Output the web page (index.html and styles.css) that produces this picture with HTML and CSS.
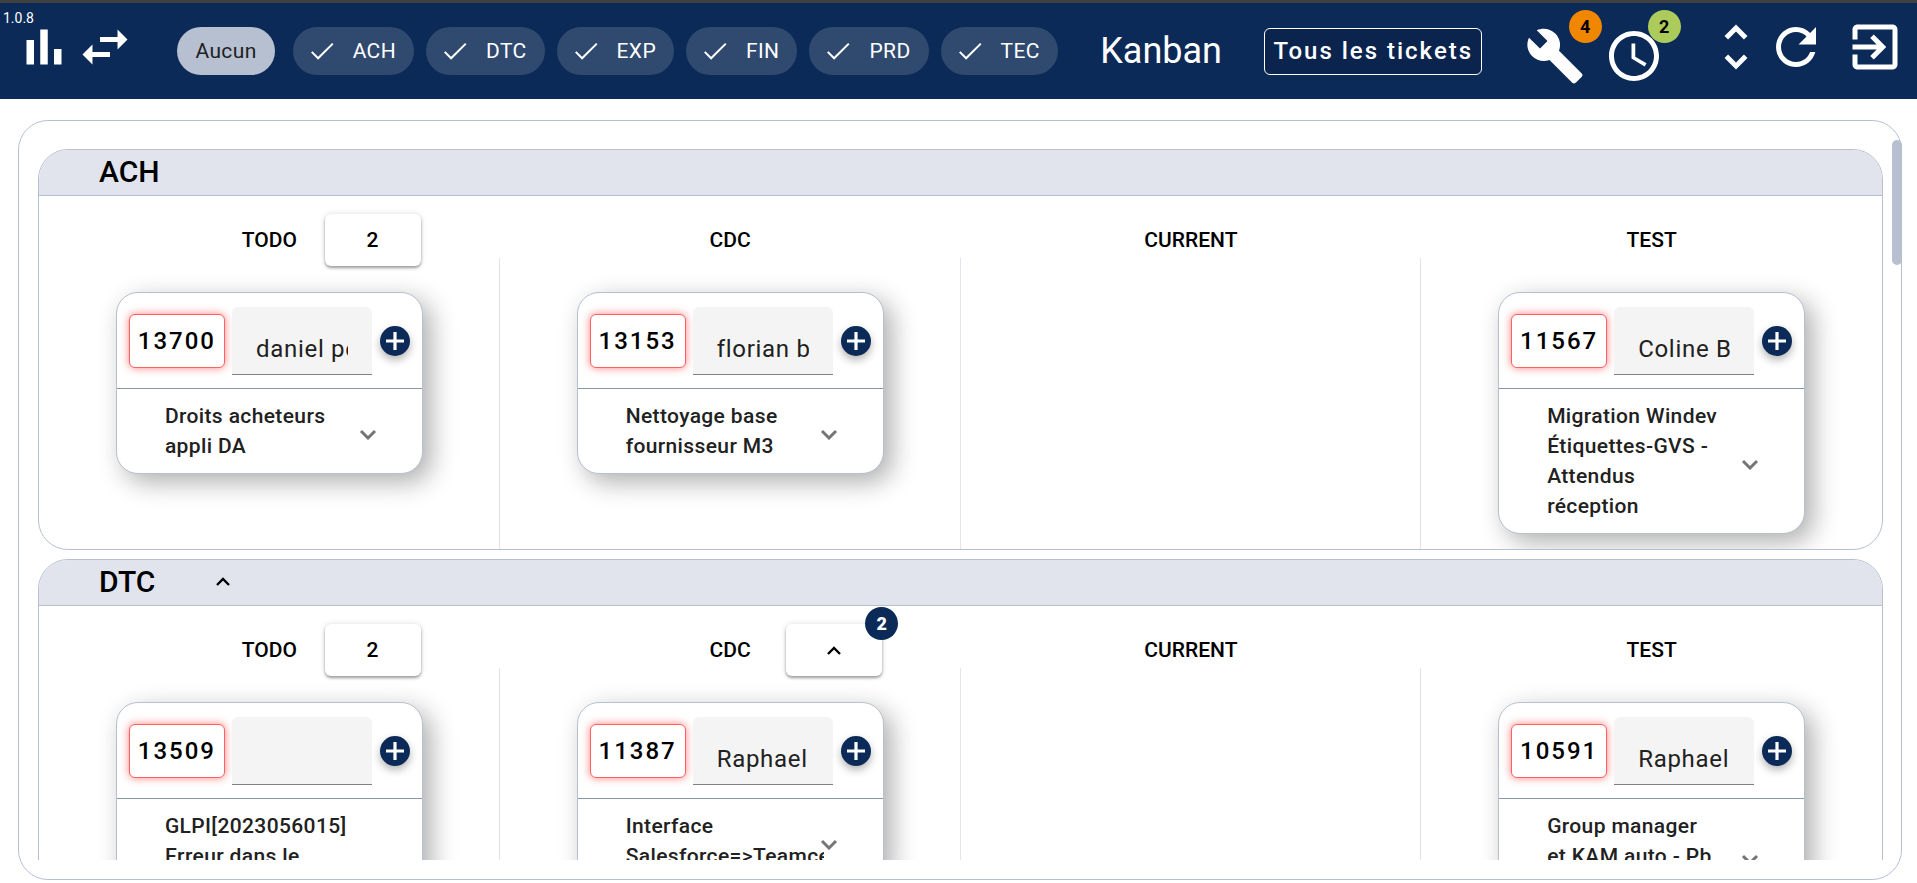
FILE: index.html
```html
<!DOCTYPE html>
<html lang="fr">
<head>
<meta charset="utf-8">
<title>Kanban</title>
<link rel="stylesheet" href="styles.css">
</head>
<body>
<svg class="defs" aria-hidden="true">
  <symbol id="check" viewBox="1 3 23 18"><path d="M1.73 12.91 8.1 19.28 22.79 4.59" fill="none" stroke="currentColor" stroke-width="2"/></symbol>
  <symbol id="plus" viewBox="0 0 18 18"><path d="M7.4 0h3.2v7.4H18v3.2h-7.4V18H7.4v-7.4H0V7.4h7.4z" fill="currentColor"/></symbol>
  <symbol id="down" viewBox="0 0 18 18"><path d="M2 9l7 7 7-7" fill="none" stroke="currentColor" stroke-width="3"/></symbol>
  <symbol id="up" viewBox="0 0 14 9"><path d="M1 8l6-6 6 6" fill="none" stroke="currentColor" stroke-width="2.4"/></symbol>
</svg>
<header class="topbar">
  <span class="version">1.0.8</span>
  <nav class="nav">
    <button class="icon-btn" aria-label="Statistiques"><svg viewBox="0 0 24 24"><path d="M5 9.2h3V19H5zM10.5 5h3v14h-3zM16 12.8h3V19h-3z"/></svg></button>
    <button class="icon-btn" aria-label="Permuter"><svg viewBox="0 0 24 24"><path d="M6.99 11L3 15l3.99 4v-3H14v-2H6.99v-3zM21 9l-3.99-4v3H10v2h7.01v3L21 9z"/></svg></button>
  </nav>
  <div class="chips">
    <button class="chip chip-none">Aucun</button>
    <button class="chip" aria-pressed="true"><svg><use href="#check"/></svg>ACH</button>
    <button class="chip" aria-pressed="true"><svg><use href="#check"/></svg>DTC</button>
    <button class="chip" aria-pressed="true"><svg><use href="#check"/></svg>EXP</button>
    <button class="chip" aria-pressed="true"><svg><use href="#check"/></svg>FIN</button>
    <button class="chip" aria-pressed="true"><svg><use href="#check"/></svg>PRD</button>
    <button class="chip" aria-pressed="true"><svg><use href="#check"/></svg>TEC</button>
  </div>
  <h1 class="title">Kanban</h1>
  <button class="all-tickets">Tous les tickets</button>
  <div class="alerts">
    <button class="icon-btn" aria-label="Maintenance"><svg viewBox="0 0 24 24"><path d="M22.7 19l-9.1-9.1c.9-2.3.4-5-1.5-6.9-2-2-5-2.4-7.4-1.3L9 6 6 9 1.6 4.7C.4 7.1.9 10.1 2.9 12.1c1.9 1.9 4.6 2.4 6.9 1.5l9.1 9.1c.4.4 1 .4 1.4 0l2.3-2.3c.5-.4.5-1.1.1-1.4z"/></svg><span class="badge badge-orange">4</span></button>
    <button class="icon-btn" aria-label="En attente"><svg viewBox="0 0 24 24"><path d="M11.99 2C6.47 2 2 6.48 2 12s4.47 10 9.99 10C17.52 22 22 17.52 22 12S17.52 2 11.99 2zM12 20c-4.42 0-8-3.58-8-8s3.58-8 8-8 8 3.58 8 8-3.58 8-8 8zm.5-13H11v6l5.25 3.15.75-1.23-4.5-2.67z"/></svg><span class="badge badge-green">2</span></button>
  </div>
  <div class="actions">
    <button class="icon-btn" aria-label="Tout déplier"><svg viewBox="0 0 24 24"><path d="M12 5.83L15.17 9l1.41-1.41L12 3 7.41 7.59 8.83 9 12 5.83zm0 12.34L8.83 15l-1.41 1.41L12 21l4.59-4.59L15.17 15 12 18.17z"/></svg></button>
    <button class="icon-btn" aria-label="Rafraîchir"><svg viewBox="0 0 24 24"><path d="M17.65 6.35C16.2 4.9 14.21 4 12 4c-4.42 0-7.99 3.58-7.99 8s3.57 8 7.99 8c3.73 0 6.84-2.55 7.73-6h-2.08c-.82 2.33-3.04 4-5.65 4-3.31 0-6-2.69-6-6s2.69-6 6-6c1.66 0 3.14.69 4.22 1.78L13 11h7V4l-2.35 2.35z"/></svg></button>
    <button class="icon-btn exit" aria-label="Quitter"><svg viewBox="0 0 24 24"><path d="M10.09 15.59L11.5 17l5-5-5-5-1.41 1.41L12.67 11H3v2h9.67l-2.58 2.59zM19 3H5c-1.11 0-2 .9-2 2v4h2V5h14v14H5v-4H3v4c0 1.1.89 2 2 2h14c1.1 0 2-.9 2-2V5c0-1.1-.9-2-2-2z"/></svg></button>
  </div>
</header>
<main class="board">
  <div class="lanes">
    <section class="lane">
      <header class="lane-head"><h2>ACH</h2></header>
      <div class="columns">
        <section class="column">
          <header class="column-head"><h3>TODO</h3><button class="count">2</button></header>
          <div class="column-body">
            <article class="card">
              <div class="card-top"><button class="ticket">13700</button><input class="owner" type="text" value="daniel pe" aria-label="Responsable du ticket 13700"><button class="add" aria-label="Ajouter"><svg><use href="#plus"/></svg></button></div>
              <button class="card-info"><span class="card-text">Droits acheteurs appli DA</span><svg><use href="#down"/></svg></button>
            </article>
          </div>
        </section>
        <section class="column">
          <header class="column-head"><h3>CDC</h3></header>
          <div class="column-body">
            <article class="card">
              <div class="card-top"><button class="ticket">13153</button><input class="owner" type="text" value="florian b" aria-label="Responsable du ticket 13153"><button class="add" aria-label="Ajouter"><svg><use href="#plus"/></svg></button></div>
              <button class="card-info"><span class="card-text">Nettoyage base fournisseur M3</span><svg><use href="#down"/></svg></button>
            </article>
          </div>
        </section>
        <section class="column">
          <header class="column-head"><h3>CURRENT</h3></header>
          <div class="column-body"></div>
        </section>
        <section class="column">
          <header class="column-head"><h3>TEST</h3></header>
          <div class="column-body">
            <article class="card">
              <div class="card-top"><button class="ticket">11567</button><input class="owner" type="text" value="Coline B" aria-label="Responsable du ticket 11567"><button class="add" aria-label="Ajouter"><svg><use href="#plus"/></svg></button></div>
              <button class="card-info"><span class="card-text">Migration Windev Étiquettes-GVS - Attendus réception</span><svg><use href="#down"/></svg></button>
            </article>
          </div>
        </section>
      </div>
    </section>
    <section class="lane">
      <header class="lane-head"><h2>DTC</h2><button class="fold" aria-label="Replier"><svg><use href="#up"/></svg></button></header>
      <div class="columns">
        <section class="column">
          <header class="column-head"><h3>TODO</h3><button class="count">2</button></header>
          <div class="column-body">
            <article class="card">
              <div class="card-top"><button class="ticket">13509</button><input class="owner" type="text" aria-label="Responsable du ticket 13509"><button class="add" aria-label="Ajouter"><svg><use href="#plus"/></svg></button></div>
              <button class="card-info"><span class="card-text lines-4">GLPI[2023056015] Erreur dans le</span><svg><use href="#down"/></svg></button>
            </article>
          </div>
        </section>
        <section class="column">
          <header class="column-head"><h3>CDC</h3><button class="count" aria-label="Replier la colonne"><svg><use href="#up"/></svg><span class="badge badge-navy">2</span></button></header>
          <div class="column-body">
            <article class="card">
              <div class="card-top"><button class="ticket">11387</button><input class="owner" type="text" value="Raphael" aria-label="Responsable du ticket 11387"><button class="add" aria-label="Ajouter"><svg><use href="#plus"/></svg></button></div>
              <button class="card-info"><span class="card-text">Interface Salesforce=&gt;Teamcenter</span><svg><use href="#down"/></svg></button>
            </article>
          </div>
        </section>
        <section class="column">
          <header class="column-head"><h3>CURRENT</h3></header>
          <div class="column-body"></div>
        </section>
        <section class="column">
          <header class="column-head"><h3>TEST</h3></header>
          <div class="column-body">
            <article class="card">
              <div class="card-top"><button class="ticket">10591</button><input class="owner" type="text" value="Raphael" aria-label="Responsable du ticket 10591"><button class="add" aria-label="Ajouter"><svg><use href="#plus"/></svg></button></div>
              <button class="card-info"><span class="card-text lines-3">Group manager et KAM auto - Pb</span><svg><use href="#down"/></svg></button>
            </article>
          </div>
        </section>
      </div>
    </section>
  </div>
  <div class="thumb"></div>
</main>
</body>
</html>
```
FILE: styles.css
```css
:root {
  --navy: #0c2a57;
  --line: #b6c0d0;
  --pale: #e1e4ed;
}

* { box-sizing: border-box; }

body {
  margin: 0;
  height: 100vh;
  display: flex;
  flex-direction: column;
  overflow: hidden;
  background: #fff;
  font-family: Roboto, "Liberation Sans", sans-serif;
  color: #000;
}

h1, h2, h3 { margin: 0; font-weight: 500; }

button {
  margin: 0;
  padding: 0;
  border: 0;
  background: none;
  font: inherit;
  color: inherit;
  cursor: pointer;
}

.defs { position: absolute; width: 0; height: 0; }

/* Top bar */
.topbar {
  position: relative;
  flex: none;
  display: flex;
  align-items: center;
  justify-content: space-between;
  height: 99px;
  padding: 0 12px 0 14px;
  border-top: 3px solid #414141;
  background: var(--navy);
  color: #fff;
}

.version {
  position: absolute;
  top: 7px;
  left: 3px;
  font-size: 14px;
  line-height: 16px;
}

.nav, .chips, .alerts, .actions { display: flex; align-items: center; }
.nav { gap: 1px; }
.nav, .actions { padding-bottom: 8px; }
.alerts { gap: 19px; padding-top: 10px; }
.chips { gap: 12px; }
.exit { margin-left: 19px; }

.icon-btn { position: relative; width: 60px; height: 60px; }
.icon-btn svg { display: block; width: 60px; height: 60px; fill: currentColor; }

.chip {
  display: flex;
  align-items: center;
  gap: 19px;
  height: 48px;
  padding: 0 18px;
  border-radius: 24px;
  background: #304a6f;
  font-size: 21px;
  line-height: 30px;
  letter-spacing: .0178em;
}
.chip svg { width: 23px; height: 18px; }
.chip-none { margin-right: 6px; background: var(--line); color: #212121; }

.title { font-size: 36px; line-height: 48px; font-weight: 400; }

.all-tickets {
  height: 47px;
  padding: 0 8px;
  border: 1px solid #fff;
  border-radius: 6px;
  background: #0a244d;
  font-size: 24px;
  font-weight: 500;
  letter-spacing: 2px;
}

.badge {
  position: absolute;
  top: -16px;
  right: -17px;
  width: 33px;
  height: 33px;
  border-radius: 50%;
  font-size: 18px;
  line-height: 33px;
  font-weight: 700;
  letter-spacing: 0;
  text-align: center;
}
.badge-orange { background: #f18700; color: #000; }
.badge-green { background: #adcb5b; color: #000; }
.badge-navy { top: -17px; right: -16px; background: var(--navy); color: #fff; font-weight: 900; }

/* Board */
.board {
  position: relative;
  flex: 1;
  min-height: 0;
  margin: 21px 15px 3px 18px;
  padding: 19px 0;
  border: 1px solid var(--line);
  border-radius: 30px;
}

.lanes {
  display: flex;
  flex-direction: column;
  gap: 9px;
  height: 100%;
  padding: 9px 18px 0 19px;
  overflow: hidden;
}

.thumb {
  position: absolute;
  top: 19px;
  right: -1px;
  width: 10px;
  height: 125px;
  border-radius: 5px;
  background: var(--line);
}

.lane {
  flex: none;
  border: 1px solid var(--line);
  border-radius: 30px;
  overflow: hidden;
}

.lane-head {
  display: flex;
  align-items: center;
  gap: 61px;
  height: 46px;
  padding: 0 60px 2px;
  border-bottom: 1px solid var(--line);
  background: var(--pale);
}
.lane-head h2 { font-size: 30px; line-height: 42px; }
.fold svg { display: block; width: 14px; height: 9px; }

.columns { display: grid; grid-template-columns: repeat(4, 1fr); }

.column { display: flex; flex-direction: column; }

.column-head {
  display: grid;
  grid-template: 52px / 1fr auto 1fr;
  align-items: center;
  align-self: center;
  width: 304px;
  height: 62px;
  padding-top: 18px;
}
.column-head h3 { grid-column: 2; font-size: 21px; line-height: 30px; }

.count {
  position: relative;
  display: flex;
  align-items: center;
  justify-content: center;
  justify-self: end;
  width: 96px;
  height: 52px;
  border-radius: 6px;
  background: #fff;
  box-shadow: 0 2px 3px rgba(0, 0, 0, .35), 0 0 6px rgba(0, 0, 0, .12);
  font-size: 21px;
  font-weight: 500;
  letter-spacing: 2px;
}
.count svg { width: 14px; height: 9px; }

.column-body {
  flex: 1;
  padding: 34px 0 15px 1px;
  border-right: 1px solid var(--pale);
}
.column:last-child .column-body { border-right-color: transparent; }

/* Ticket card */
.card {
  width: 307px;
  margin: 0 auto;
  border: 1px solid var(--line);
  border-radius: 22px;
  background: #fff;
  box-shadow: 8px 8px 26px rgba(0, 0, 0, .32);
}

.card-top {
  display: flex;
  align-items: center;
  padding: 14px 12px 13px;
  border-bottom: 1px solid #8497ad;
}

.ticket {
  width: 96px;
  height: 54px;
  margin-right: 7px;
  border: 1px solid #ff5f5f;
  border-radius: 6px;
  background: #fff;
  box-shadow: 0 0 8px rgba(255, 60, 60, .65);
  font-size: 24px;
  font-weight: 500;
  letter-spacing: 2px;
}

.owner {
  flex: 1;
  min-width: 0;
  height: 68px;
  margin: 0 8px 0 0;
  padding: 25px 24px 8px;
  border: 0;
  border-bottom: 1px solid #808080;
  border-radius: 6px 6px 0 0;
  background: #f4f4f4;
  font-family: inherit;
  font-size: 24px;
  letter-spacing: .03em;
  color: #212121;
}

.add {
  display: grid;
  place-items: center;
  width: 30px;
  height: 30px;
  border-radius: 50%;
  background: var(--navy);
  box-shadow: 0 4px 8px rgba(0, 0, 0, .3);
  color: #fff;
}
.add svg { width: 18px; height: 18px; }

.card-info {
  display: flex;
  align-items: center;
  width: 100%;
  padding: 12px 45px 12px 48px;
  text-align: left;
  color: #212121;
}
.card-info svg { flex: none; width: 18px; height: 18px; margin-left: -4px; color: #757575; }

.card-text {
  flex: 1;
  min-width: 0;
  padding-right: 26px;
  overflow: hidden;
  font-size: 21px;
  line-height: 30px;
  font-weight: 500;
  letter-spacing: .0178em;
}
.lines-3 { min-height: 90px; }
.lines-4 { min-height: 120px; }
```
